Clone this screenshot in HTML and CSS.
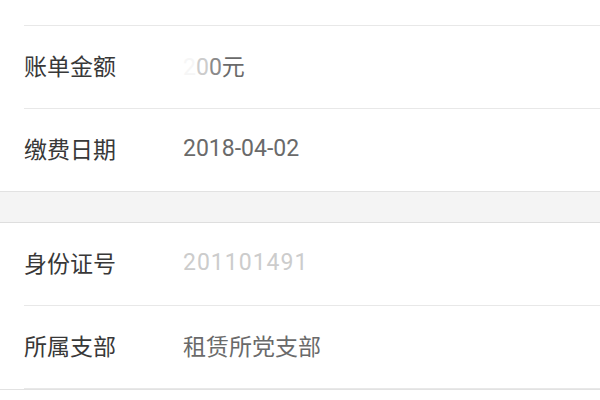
FILE: index.html
```html
<!DOCTYPE html>
<html lang="zh">
<head>
<meta charset="utf-8">
<link rel="stylesheet" href="styles.css">
</head>
<body>
<div class="section first">
  <div class="row"><span class="label"></span><span class="value"></span></div>
  <div class="row"><span class="label">账单金额</span><span class="value"><span class="hidden">2</span><span class="masked">0</span><span class="half">0</span>元</span></div>
  <div class="row last"><span class="label">缴费日期</span><span class="value">2018-04-02</span></div>
</div>
<div class="gap"></div>
<div class="section">
  <div class="row"><span class="label">身份证号</span><span class="value masked id">201101491</span></div>
  <div class="row"><span class="label">所属支部</span><span class="value">租赁所党支部</span></div>
</div>
</body>
</html>
```
FILE: styles.css
```css
html, body {
  margin: 0;
  padding: 0;
  background: #ffffff;
  overflow: hidden;
}
body {
  font-family: Roboto, "Noto Sans CJK SC", sans-serif;
  font-size: 23px;
}
.section {
  background: #ffffff;
  border-bottom: 1px solid #e2e2e2;
}
.section.first {
  margin-top: -57px;
}
.row {
  height: 82px;
  box-sizing: content-box;
  margin-left: 24px;
  display: flex;
  align-items: center;
  border-bottom: 1px solid #e8e8e8;
}
.label, .value {
  margin-bottom: 4px;
}
.row.last {
  border-bottom: none;
}
.label {
  width: 159px;
  color: #383838;
  flex: none;
}
.value {
  color: #6a6a6a;
}
.hidden {
  color: #f6f6f6;
}
.masked {
  color: #cccccc;
}
.half {
  color: #8a8a8a;
}
.id {
  letter-spacing: 1px;
}
.gap {
  height: 30px;
  background: #f4f4f4;
  border-bottom: 1px solid #dedede;
}
```
